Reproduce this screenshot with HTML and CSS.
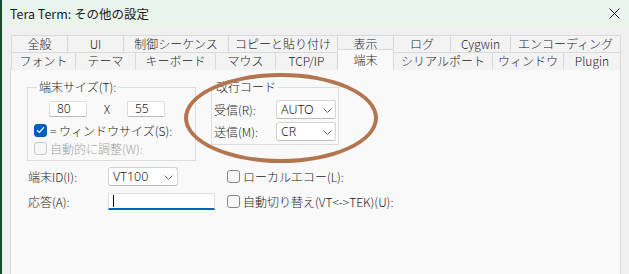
FILE: index.html
```html
<!DOCTYPE html>
<html lang="ja">
<head>
    <meta charset="UTF-8">
    <meta name="viewport" content="width=device-width, initial-scale=1.0">
    <title>Tera Term: その他の設定</title>
    <link rel="stylesheet" href="styles.css">
</head>
<body>
    <div class="window">
        <div class="titlebar">
            <span class="title">Tera Term: その他の設定</span>
            <svg class="close" width="11" height="11" viewBox="0 0 11 11">
                <path d="M0.5 0.5L10.5 10.5M10.5 0.5L0.5 10.5" stroke="#1a1a1a" stroke-width="1"/>
            </svg>
        </div>

        <div class="tabs">
            <div class="tab-row row-top">
                <div class="tab">全般</div>
                <div class="tab">UI</div>
                <div class="tab">制御シーケンス</div>
                <div class="tab">コピーと貼り付け</div>
                <div class="tab">表示</div>
                <div class="tab">ログ</div>
                <div class="tab">Cygwin</div>
                <div class="tab">エンコーディング</div>
            </div>
            <div class="tab-row row-bottom">
                <div class="tab">フォント</div>
                <div class="tab">テーマ</div>
                <div class="tab">キーボード</div>
                <div class="tab">マウス</div>
                <div class="tab">TCP/IP</div>
                <div class="tab active">端末</div>
                <div class="tab">シリアルポート</div>
                <div class="tab">ウィンドウ</div>
                <div class="tab">Plugin</div>
            </div>
        </div>

        <div class="panel">
            <div class="groups">
                <fieldset class="group size-group">
                    <legend>端末サイズ(T):</legend>
                    <div class="size-row">
                        <span class="field num">80</span>
                        <span class="times">X</span>
                        <span class="field num">55</span>
                    </div>
                    <div class="check">
                        <span class="box checked">
                            <svg width="9" height="8" viewBox="0 0 9 8">
                                <path d="M1 4.2L3.4 6.4L8 1.2" fill="none" stroke="#fff" stroke-width="1.2"/>
                            </svg>
                        </span>
                        <span>= ウィンドウサイズ(S):</span>
                    </div>
                    <div class="check disabled">
                        <span class="box"></span>
                        <span>自動的に調整(W):</span>
                    </div>
                </fieldset>

                <fieldset class="group newline-group">
                    <legend>改行コード</legend>
                    <div class="pair">
                        <span>受信(R):</span>
                        <div class="combo">AUTO
                            <svg class="chevron" width="9" height="5" viewBox="0 0 9 5"><path d="M0.5 0.5L4.5 4.5L8.5 0.5" fill="none" stroke="#666" stroke-width="1"/></svg>
                        </div>
                    </div>
                    <div class="pair">
                        <span>送信(M):</span>
                        <div class="combo">CR
                            <svg class="chevron" width="9" height="5" viewBox="0 0 9 5"><path d="M0.5 0.5L4.5 4.5L8.5 0.5" fill="none" stroke="#666" stroke-width="1"/></svg>
                        </div>
                    </div>
                </fieldset>
            </div>

            <div class="options">
                <span class="opt-label">端末ID(I):</span>
                <div class="combo id-combo">VT100
                    <svg class="chevron" width="9" height="5" viewBox="0 0 9 5"><path d="M0.5 0.5L4.5 4.5L8.5 0.5" fill="none" stroke="#666" stroke-width="1"/></svg>
                </div>
                <div class="check">
                    <span class="box"></span>
                    <span>ローカルエコー(L):</span>
                </div>

                <span class="opt-label">応答(A):</span>
                <div class="field answer"><span class="caret"></span></div>
                <div class="check">
                    <span class="box"></span>
                    <span>自動切り替え(VT&lt;-&gt;TEK)(U):</span>
                </div>
            </div>
        </div>
    </div>

    <!-- hand-drawn highlight around the newline settings -->
    <div class="mark"></div>
</body>
</html>
```

FILE: styles.css
```css
* {
    box-sizing: border-box;
}

body {
    margin: 0;
    width: 629px;
    height: 274px;
    overflow: hidden;
    position: relative;
    background: #f0f0f0;
    font-family: "Noto Sans CJK JP", "Noto Sans", sans-serif;
    font-size: 12px;
    font-weight: 300;
    color: #1a1a1a;
}

.window {
    height: 274px;
    border-left: 2px solid #1c4a2c;
}

.titlebar {
    height: 27px;
    background: #e9f4ed;
    display: flex;
    align-items: center;
    justify-content: space-between;
    padding: 0 9px 0 8px;
}

.title {
    font-size: 12.5px;
    font-weight: 400;
}

/* tab strip, two rows */
.tabs {
    margin: 8px 0 0 9px;
    width: 609px;
}

.tab-row {
    display: grid;
    height: 17px;
}

.row-top {
    grid-template-columns: 56px 56px 105px 109px 56px 57px 60px 110px;
}

.row-bottom {
    grid-template-columns: 64px 60px 80px 60px 62px 56px 99px 71px 57px;
    position: relative;
    z-index: 1;
}

.tab {
    border: 1px solid #d9d9d9;
    border-bottom: none;
    margin-right: -1px;
    background: #f3f3f3;
    text-align: center;
    line-height: 15px;
    white-space: nowrap;
}

.tab.active {
    background: #f9f9f9;
    margin-top: -3px;
    height: 21px;
    padding-top: 2px;
    line-height: 15px;
}

.panel {
    margin-left: 8px;
    width: 611px;
    height: 210px;
    background: #f9f9f9;
    border: 1px solid #dadada;
}

.groups {
    display: flex;
    align-items: flex-start;
    margin: 9px 0 0 16px;
}

.group {
    margin: 0;
    border: 1px solid #dcdcdc;
    min-width: 0;
}

.group legend {
    padding: 0 2px;
    line-height: 16px;
}

.size-group {
    width: 169px;
    padding: 5px 0 3px 6px;
    margin-right: 15px;
}

.size-group legend {
    margin-left: 3px;
}

.size-row {
    display: flex;
    align-items: center;
    padding-left: 15px;
    margin-bottom: 4px;
}

.field {
    background: #fff;
    border: 1px solid #dcdcdc;
    border-bottom-color: #b8b8b8;
    border-radius: 2px;
    height: 16px;
    line-height: 14px;
}

.num {
    width: 38px;
    padding-left: 7px;
    font-family: "Noto Sans", sans-serif;
}

.times {
    width: 40px;
    text-align: center;
}

.check {
    display: flex;
    align-items: center;
    gap: 3px;
    height: 18px;
    white-space: nowrap;
}

.box {
    width: 13px;
    height: 13px;
    border: 1px solid #858585;
    border-radius: 3px;
    background: #f7f7f7;
    display: flex;
    align-items: center;
    justify-content: center;
}

.box.checked {
    background: #005fb8;
    border-color: #005fb8;
}

.check.disabled {
    color: #a0a0a0;
}

.check.disabled .box {
    border-color: #c8c8c8;
}

.newline-group {
    width: 128px;
    height: 66px;
    padding: 5px 2px 0 2px;
}

.pair {
    display: flex;
    align-items: center;
    justify-content: space-between;
    margin-bottom: 3px;
}

.combo {
    position: relative;
    width: 60px;
    height: 19px;
    background: #fff;
    border: 1px solid #d3d3d3;
    border-bottom-color: #bdbdbd;
    border-radius: 3px;
    padding-left: 4px;
    line-height: 17px;
    font-family: "Noto Sans", sans-serif;
    font-size: 12.5px;
}

.chevron {
    position: absolute;
    right: 3px;
    top: 7px;
}

.options {
    display: grid;
    grid-template-columns: 80px 119px auto;
    row-gap: 6px;
    align-items: center;
    margin: 6px 0 0 17px;
}

.id-combo {
    width: 70px;
}

.id-combo .chevron {
    right: 4px;
}

.answer {
    width: 107px;
    height: 17px;
    border-bottom: 2px solid #0067c0;
    border-radius: 2px 2px 0 0;
    padding-left: 4px;
    display: flex;
    align-items: center;
}

.caret {
    width: 1px;
    height: 12px;
    background: #000;
}

.mark {
    position: absolute;
    left: 184px;
    top: 73px;
    width: 194px;
    height: 90px;
    border: 4px solid #b3754f;
    border-radius: 50%;
}
```
